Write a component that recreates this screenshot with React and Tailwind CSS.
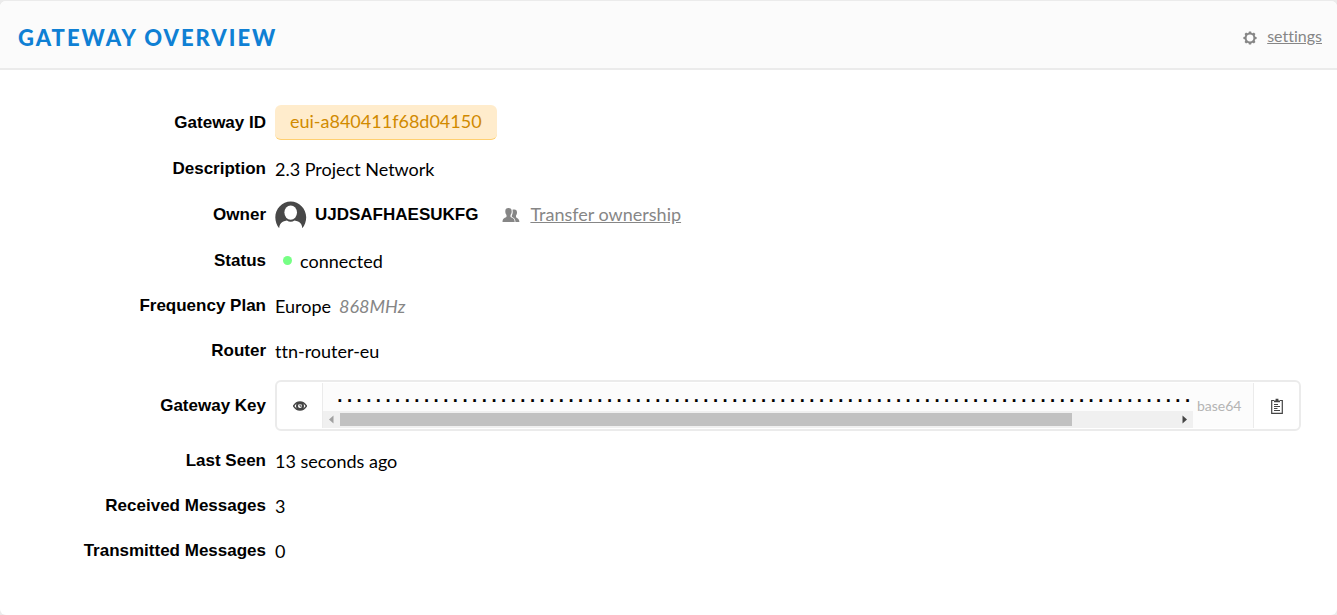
import React from "react";

const keyDots = "·".repeat(89);

function GearIcon() {
  return (
    <svg viewBox="0 0 14 14" className="mt-1 size-3.5" aria-hidden="true">
      <circle cx="7" cy="7" r="4.4" fill="none" stroke="#868686" strokeWidth="2" />
      {[0, 45, 90, 135, 180, 225, 270, 315].map((a) => (
        <path key={a} d="M5.400 2.800L5.900 0.400H8.100L8.600 2.800Z" fill="#868686" transform={`rotate(${a} 7 7)`} />
      ))}
    </svg>
  );
}

function Avatar() {
  return (
    <svg viewBox="0 -1 32 32" className="size-8" aria-hidden="true">
      <path
        d="M4.2 28.2C1.8 25.4 0.3 21.4 0.3 17.2C0.3 8.6 7.3 1.4 15.700 1.400S31.200 8.600 31.200 17.200C31.200 21.400 29.700 25.400 27.300 28.200C27 23.800 25.300 21.600 19.500 20.400C17.200 22.200 14.200 22.200 11.900 20.400C6.200 21.600 4.500 23.800 4.200 28.200Z"
        fill="#484848"
      />
      <ellipse cx="15.700" cy="12.600" rx="6.300" ry="7.200" fill="#fff" />
    </svg>
  );
}

function PeopleIcon() {
  return (
    <svg viewBox="0 0 18 14" className="mt-0.5 h-3.5 w-[18px]" fill="#868686" aria-hidden="true">
      <path d="M10.500 1.800C11 1.500 11.600 1.400 12.300 1.400C14.200 1.400 15 2.600 15 4.500C15 6 14.500 6.800 14 7.500V9.200C15 10.300 17.400 10.300 17.400 14H13.500C13.400 11.300 12.300 10 9.800 8.800V7.500C10.700 6.300 11 4 10.500 1.800Z" />
      <path d="M6.500 0C8.800 0 9.800 1.300 9.700 3.500C9.700 5.200 9.200 6 8.500 7V8.800C9.500 9.900 12.700 10 12.700 14H0.500C0.500 10 3.600 9.900 4.500 8.800V7C3.800 6 3.300 5.200 3.300 3.500C3.200 1.300 4.200 0 6.500 0Z" />
    </svg>
  );
}

function EyeIcon() {
  return (
    <svg viewBox="0 0 14 10" className="h-2.5 w-3.5" aria-hidden="true">
      <path d="M0.500 5C2.300 2 4.500 0.900 7 0.900S11.700 2 13.500 5C11.700 8 9.500 9.100 7 9.100S2.300 8 0.500 5Z" fill="none" stroke="#444" strokeWidth="1.500" />
      <circle cx="7" cy="5" r="3" fill="none" stroke="#444" strokeWidth="2" />
      <path d="M7 3.400V5.200H8.600" fill="none" stroke="#444" strokeWidth="1" />
    </svg>
  );
}

function ClipboardIcon() {
  return (
    <svg viewBox="0 0 12 16" className="h-4 w-3" fill="none" stroke="#444" aria-hidden="true">
      <path d="M3 2.500H0.700V15.300H11.300V2.500H9" strokeWidth="1.200" />
      <path d="M3 4.200V2.600H4.600V0.800H7.400V2.600H9V4.200Z" fill="#444" stroke="none" />
      <path d="M3 6.500H7M3 8.500H9M3 10.500H6.500M3 12.500H9" strokeWidth="1" />
    </svg>
  );
}

function Row({ label, children }) {
  return (
    <div className="grid min-h-[33px] grid-cols-[266px_minmax(0,1fr)] items-center gap-[9px]">
      <dt className="text-right font-['Liberation_Sans',sans-serif] text-[17px] font-bold">{label}</dt>
      <dd className="flex items-center leading-5">{children}</dd>
    </div>
  );
}

export default function App() {
  return (
    <main className="min-h-screen bg-[#ebebeb] pt-px font-[Lato,sans-serif] text-lg leading-[22px] text-black [font-variant-ligatures:none]">
      <section className="min-h-[calc(100vh-1px)] overflow-hidden rounded-md bg-white">
        <header className="flex h-[69px] items-center justify-between border-b-2 border-[#ebebeb] bg-[#fbfbfb] pr-[15px] pl-[18px]">
          <h1 className="mt-1.5 text-[22px] font-black tracking-[2px] text-[#0f80d4] uppercase">Gateway Overview</h1>
          <a href="#settings" className="mt-0.5 flex items-center gap-2.5 text-base text-[#868686]">
            <GearIcon />
            <span className="underline">settings</span>
          </a>
        </header>

        <dl className="flex flex-col gap-3 pt-[35px] pr-9 pb-12">
          <Row label="Gateway ID">
            <span className="flex h-[35px] items-center rounded-md border-b border-[#ffcf70] bg-[#ffeccc] px-[15px] pb-0.5 text-[#d18a00]">
              eui-a840411f68d04150
            </span>
          </Row>
          <Row label="Description">2.3 Project Network</Row>
          <Row label="Owner">
            <span className="flex h-[35px] items-center gap-2">
              <Avatar />
              <span className="font-['Liberation_Sans',sans-serif] text-[17px] font-bold">UJDSAFHAESUKFG</span>
            </span>
            <a href="#transfer" className="ml-6 flex items-center gap-2.5 pb-0.5 text-[#868686]">
              <PeopleIcon />
              <span className="underline">Transfer ownership</span>
            </a>
          </Row>
          <Row label="Status">
            <span className="mr-2 ml-2 size-[9px] rounded-full bg-[#76ff85]" />
            connected
          </Row>
          <Row label="Frequency Plan">
            Europe
            <em className="ml-2 text-[#868686]">868MHz</em>
          </Row>
          <Row label="Router">ttn-router-eu</Row>
          <Row label="Gateway Key">
            <div className="my-px flex h-[51px] w-full rounded-md border-2 border-[#ebebeb] py-px">
              <button type="button" aria-label="Show key" className="flex w-[46px] shrink-0 items-center justify-center border-r border-[#ebebeb]">
                <EyeIcon />
              </button>
              <div className="flex min-w-0 flex-1 items-center bg-[#fcfcfc]">
                <div className="flex h-full min-w-0 flex-1 flex-col">
                  <code className="block flex-1 overflow-hidden pt-2 pl-3 font-['DejaVu_Sans_Mono',monospace] text-base leading-5 font-bold whitespace-nowrap">
                    {keyDots}
                  </code>
                  <div className="flex h-[17px] items-center bg-[#f0f0f0]" aria-hidden="true">
                    <svg viewBox="0 0 17 17" className="size-[17px] shrink-0" fill="#a0a0a0"><path d="M10.500 4.500V12.500L6 8.500Z" /></svg>
                    <div className="h-[13px] flex-[7] bg-[#c1c1c1]" />
                    <div className="flex-1" />
                    <svg viewBox="0 0 17 17" className="size-[17px] shrink-0" fill="#444"><path d="M6.500 4.500V12.500L11 8.500Z" /></svg>
                  </div>
                </div>
                <span className="w-[60px] pl-1 text-sm text-[#b4b4b4]">base64</span>
              </div>
              <button type="button" aria-label="Copy key" className="flex w-[46px] shrink-0 items-center justify-center border-l border-[#ebebeb]">
                <ClipboardIcon />
              </button>
            </div>
          </Row>
          <Row label="Last Seen">13 seconds ago</Row>
          <Row label="Received Messages">3</Row>
          <Row label="Transmitted Messages">0</Row>
        </dl>
      </section>
    </main>
  );
}
